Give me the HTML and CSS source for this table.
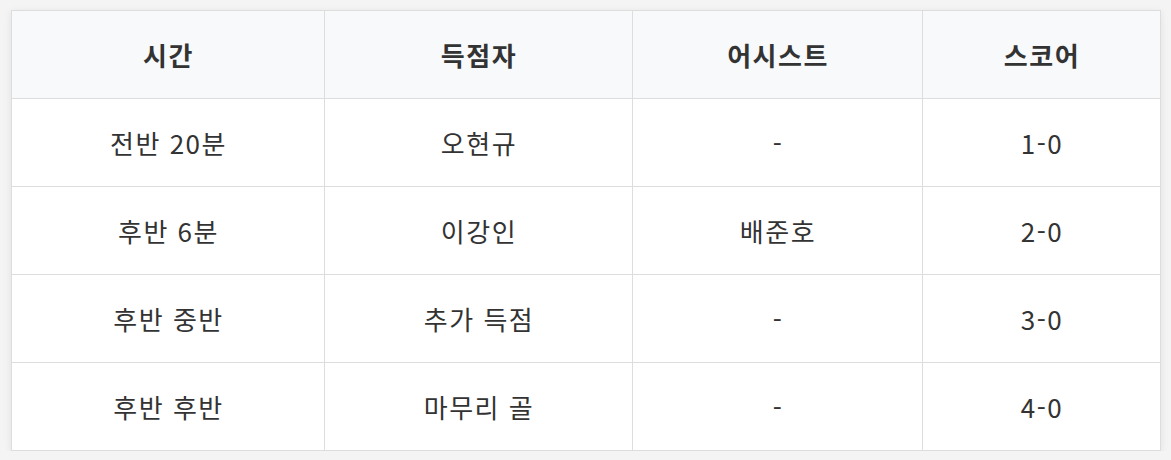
FILE: index.html
```html
<!DOCTYPE html>
<html lang="ko">
<head>
<meta charset="utf-8">
<link rel="stylesheet" href="styles.css">
</head>
<body>
<div class="wrap">
<table class="score-table">
  <thead>
    <tr><th class="c1">시간</th><th class="c2">득점자</th><th class="c3">어시스트</th><th class="c4">스코어</th></tr>
  </thead>
  <tbody>
    <tr><td>전반 20분</td><td>오현규</td><td>-</td><td>1-0</td></tr>
    <tr><td>후반 6분</td><td>이강인</td><td>배준호</td><td>2-0</td></tr>
    <tr><td>후반 중반</td><td>추가 득점</td><td>-</td><td>3-0</td></tr>
    <tr><td>후반 후반</td><td>마무리 골</td><td>-</td><td>4-0</td></tr>
  </tbody>
</table>
</div>
</body>
</html>
```
FILE: styles.css
```css
html, body {
  margin: 0;
  padding: 0;
  background: #f4f4f4;
}
.wrap {
  padding: 10px 11px 0 11px;
}
.score-table {
  width: 1149px;
  border-collapse: collapse;
  background: #fff;
  box-shadow: 0 2px 8px rgba(0,0,0,0.08);
  font-family: "Noto Sans CJK KR", "Noto Sans", sans-serif;
  font-size: 26px;
  letter-spacing: 1.5px;
  color: #333;
  table-layout: fixed;
}
.score-table th,
.score-table td {
  border: 1px solid #dddddd;
  text-align: center;
  height: 88px;
  padding: 0 0 0 1px;
  box-sizing: border-box;
}
.score-table th {
  background: #f8f9fa;
  font-weight: 700;
}
.c1 { width: 313px; }
.c2 { width: 308px; }
.c3 { width: 290px; }
.c4 { width: 238px; }
```
